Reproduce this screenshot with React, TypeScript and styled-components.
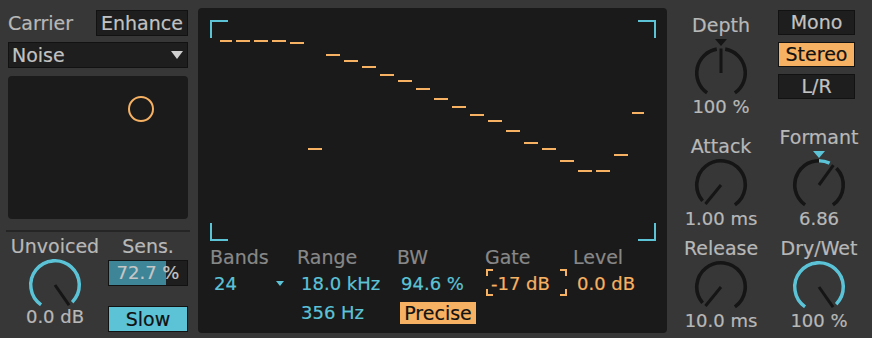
import React from "react";
import styled, { createGlobalStyle } from "styled-components";

const C = {
  bg: "#373737",
  panel: "#1a1a1a",
  pad: "#1b1b1b",
  btn: "#1e1e1e",
  border: "#121212",
  label: "#b8b8b8",
  dim: "#888888",
  cyan: "#5cc3d7",
  orange: "#f6b163",
  track: "#151515",
  teal: "#3d8597",
  ink: "#121212",
};

const GlobalStyle = createGlobalStyle`
  html, body { margin: 0; padding: 0; background: ${C.bg}; }
  body {
    font-family: "DejaVu Sans", "Liberation Sans", sans-serif;
    -webkit-text-stroke: 0.2px currentColor;
  }
  * { box-sizing: border-box; }
`;

const Device = styled.div`
  width: 872px;
  height: 338px;
  display: flex;
  align-items: flex-start;
  overflow: hidden;
  background: ${C.bg};
`;

/* ---------- shared text ---------- */
const Label = styled.div<{ $dim?: boolean }>`
  font-size: 19px;
  line-height: 20px;
  color: ${(p) => (p.$dim ? C.dim : C.label)};
  white-space: nowrap;
`;

const KnobValue = styled.div<{ $shift?: number }>`
  font-size: 18px;
  line-height: 18px;
  color: ${C.label};
  white-space: nowrap;
  margin-top: ${(p) => p.$shift ?? 0}px;
`;

type Tone = "dark" | "orange" | "cyan";
const Button = styled.div<{ $tone: Tone; $w: number; $h: number }>`
  width: ${(p) => p.$w}px;
  height: ${(p) => p.$h}px;
  border: 1px solid ${C.border};
  background: ${(p) =>
    p.$tone === "orange" ? C.orange : p.$tone === "cyan" ? C.cyan : C.btn};
  color: ${(p) => (p.$tone === "dark" ? "#c2c2c2" : C.ink)};
  font-size: 19px;
  line-height: ${(p) => p.$h - 2}px;
  text-align: center;
  white-space: nowrap;
`;

/* ---------- knob ---------- */
const R = 24.25;
const CX = 28;
const CY = 27;
const polar = (deg: number, r = R) => {
  const a = (deg * Math.PI) / 180;
  return [CX + r * Math.sin(a), CY - r * Math.cos(a)];
};
const arcPath = (a0: number, a1: number) => {
  if (a1 - a0 < 0.5) return "";
  const [x0, y0] = polar(a0);
  const [x1, y1] = polar(a1);
  const large = a1 - a0 > 180 ? 1 : 0;
  return `M${x0.toFixed(2)} ${y0.toFixed(2)} A${R} ${R} 0 ${large} 1 ${x1.toFixed(2)} ${y1.toFixed(2)}`;
};

const KnobSvg = styled.svg`
  display: block;
  margin-top: 2px;
`;

type Fill = "none" | "start" | "center";
function Knob({ value, fill }: { value: number; fill: Fill }) {
  const SPAN = 145;
  const GAP = 10;
  const ang = -SPAN + 2 * SPAN * value;
  const lo = ang - GAP;
  const hi = ang + GAP;
  const clipSeg = (a: number, b: number): [number, number][] => {
    const out: [number, number][] = [];
    const s1 = [a, Math.min(b, lo)];
    const s2 = [Math.max(a, hi), b];
    if (s1[1] > s1[0]) out.push([s1[0], s1[1]]);
    if (s2[1] > s2[0]) out.push([s2[0], s2[1]]);
    return out;
  };
  const track = clipSeg(-SPAN, SPAN);
  let fillSegs: [number, number][] = [];
  if (fill === "start") fillSegs = clipSeg(-SPAN, ang);
  if (fill === "center") fillSegs = ang >= 0 ? clipSeg(0, ang) : clipSeg(ang, 0);
  const [nx, ny] = polar(ang, 24.5);
  return (
    <KnobSvg width={56} height={52} viewBox="0 0 56 52">
      {track.map(([a, b], i) => (
        <path key={"t" + i} d={arcPath(a, b)} fill="none" stroke={C.track} strokeWidth={3.6} />
      ))}
      {fillSegs.map(([a, b], i) => (
        <path key={"f" + i} d={arcPath(a, b)} fill="none" stroke={C.cyan} strokeWidth={3.6} />
      ))}
      <line x1={CX} y1={CY} x2={nx} y2={ny} stroke={C.track} strokeWidth={3} />
    </KnobSvg>
  );
}

const KnobUnit = styled.div<{ $w: number }>`
  width: ${(p) => p.$w}px;
  display: flex;
  flex-direction: column;
  align-items: center;
`;

const Marker = styled.div<{ $color: string }>`
  width: 0;
  height: 0;
  margin-top: 4px;
  margin-bottom: -2px;
  border-left: 6.5px solid transparent;
  border-right: 6.5px solid transparent;
  border-top: 7px solid ${(p) => p.$color};
`;

function KnobControl(props: {
  label: string;
  value: number;
  text: string;
  fill: Fill;
  marker?: string;
  w?: number;
  shift?: number;
}) {
  return (
    <KnobUnit $w={props.w ?? 98}>
      <Label>{props.label}</Label>
      {props.marker && <Marker $color={props.marker} />}
      <Knob value={props.value} fill={props.fill} />
      <KnobValue $shift={props.shift}>{props.text}</KnobValue>
    </KnobUnit>
  );
}

/* ---------- left column ---------- */
const LeftColumn = styled.div`
  width: 180px;
  margin-left: 8px;
  padding-top: 10px;
  display: flex;
  flex-direction: column;
`;

const HeaderRow = styled.div`
  height: 26px;
  display: flex;
  align-items: center;
  justify-content: space-between;
`;

const Dropdown = styled.div`
  margin-top: 6px;
  height: 26px;
  border: 1px solid ${C.border};
  background: ${C.btn};
  padding: 0 4px 0 3px;
  display: flex;
  align-items: center;
  justify-content: space-between;
  font-size: 19px;
  line-height: 24px;
  color: #c2c2c2;
`;

const DownArrow = styled.span<{ $color: string; $w: number; $h: number }>`
  width: 0;
  height: 0;
  border-left: ${(p) => p.$w / 2}px solid transparent;
  border-right: ${(p) => p.$w / 2}px solid transparent;
  border-top: ${(p) => p.$h}px solid ${(p) => p.$color};
`;

const XYPad = styled.div`
  margin-top: 8px;
  height: 143px;
  background: ${C.pad};
  border-radius: 4px;
  position: relative;
`;

const XYHandle = styled.div`
  position: absolute;
  left: 120px;
  top: 20px;
  width: 26px;
  height: 26px;
  border: 2px solid ${C.orange};
  border-radius: 50%;
`;

const Separator = styled.div`
  margin: 11px -2px 0;
  height: 2px;
  background: #252525;
`;

const BottomSection = styled.div`
  margin-top: 4px;
  display: flex;
`;

const SensColumn = styled.div`
  width: 80px;
  margin-left: 6px;
  display: flex;
  flex-direction: column;
  align-items: center;
`;

const SensSlider = styled.div<{ $pct: number }>`
  margin-top: 4px;
  width: 80px;
  height: 26px;
  border: 1px solid ${C.border};
  background: linear-gradient(
    to right,
    ${C.teal} ${(p) => p.$pct}%,
    ${C.btn} ${(p) => p.$pct}%
  );
  font-size: 18px;
  line-height: 24px;
  text-align: center;
  color: #c6c6c6;
`;

const SlowButton = styled(Button)`
  margin-top: 20px;
`;

/* ---------- main panel ---------- */
const MainPanel = styled.div`
  margin: 8px 0 0 10px;
  width: 469px;
  height: 325px;
  background: ${C.panel};
  border-radius: 4px;
  padding: 12px 11px 0 12px;
  display: flex;
  flex-direction: column;
`;

const Display = styled.svg`
  display: block;
  width: 446px;
  height: 221px;
`;

const ParamsGrid = styled.div`
  margin-top: 6px;
  display: grid;
  grid-template-columns: 87px 100px 88px 88px 1fr;
`;

const ParamColumn = styled.div`
  display: flex;
  flex-direction: column;
  align-items: flex-start;
`;

const ParamValue = styled.div<{ $color: string }>`
  margin-top: 2px;
  height: 27px;
  padding: 2px 0 0 4px;
  font-size: 18px;
  line-height: 25px;
  color: ${(p) => p.$color};
  white-space: nowrap;
`;

const BandsSelect = styled(ParamValue)`
  width: 77px;
  padding-right: 3px;
  display: flex;
  align-items: center;
  justify-content: space-between;
`;

const GateBox = styled(ParamValue)`
  margin-left: 1px;
  width: 81px;
  padding-left: 5px;
  background:
    linear-gradient(${C.orange}, ${C.orange}) left top / 7px 2px no-repeat,
    linear-gradient(${C.orange}, ${C.orange}) left top / 2px 7px no-repeat,
    linear-gradient(${C.orange}, ${C.orange}) left bottom / 7px 2px no-repeat,
    linear-gradient(${C.orange}, ${C.orange}) left bottom / 2px 7px no-repeat,
    linear-gradient(${C.orange}, ${C.orange}) right top / 7px 2px no-repeat,
    linear-gradient(${C.orange}, ${C.orange}) right top / 2px 7px no-repeat,
    linear-gradient(${C.orange}, ${C.orange}) right bottom / 7px 2px no-repeat,
    linear-gradient(${C.orange}, ${C.orange}) right bottom / 2px 7px no-repeat;
`;

const SubValue = styled.div<{ $color: string }>`
  margin-top: 6px;
  height: 22px;
  padding-left: 4px;
  font-size: 18px;
  line-height: 22px;
  color: ${(p) => p.$color};
  white-space: nowrap;
`;

const PreciseButton = styled.div`
  margin: 6px 0 0 3px;
  width: 76px;
  height: 22px;
  background: ${C.orange};
  color: ${C.ink};
  font-size: 19px;
  line-height: 22px;
  text-align: center;
`;

/* ---------- right side ---------- */
const RightGrid = styled.div`
  margin-left: 5px;
  display: grid;
  grid-template-columns: 98px 98px;
  grid-template-rows: 116px 112px 102px;
  align-items: end;
  justify-items: center;
`;

const ModeButtons = styled.div`
  align-self: start;
  justify-self: start;
  margin: 10px 0 0 8px;
  display: flex;
  flex-direction: column;
  gap: 7px;
`;

const bandTops = [
  40, 40, 40, 40, 42, 148, 54, 60, 66, 74, 80, 88, 98, 106, 114, 120, 130, 142,
  148, 160, 170, 170, 154, 112,
];

function Spectrum() {
  const w = 446;
  const h = 221;
  const a = 18;
  return (
    <Display viewBox={`0 0 ${w} ${h}`}>
      <g fill={C.cyan}>
        <rect x={0} y={0} width={a} height={2} />
        <rect x={0} y={0} width={2} height={a} />
        <rect x={w - a} y={0} width={a} height={2} />
        <rect x={w - 2} y={0} width={2} height={a} />
        <rect x={0} y={h - 2} width={a} height={2} />
        <rect x={0} y={h - a} width={2} height={a} />
        <rect x={w - a} y={h - 2} width={a} height={2} />
        <rect x={w - 2} y={h - a} width={2} height={a} />
      </g>
      <g fill={C.orange}>
        {bandTops.map((t, i) => {
          const first = i === 0;
          const last = i === bandTops.length - 1;
          const x = first ? 10 : 8 + 18 * i;
          const width = first || last ? 12 : 14;
          return <rect key={i} x={x} y={t - 20} width={width} height={2} />;
        })}
      </g>
    </Display>
  );
}

export default function App() {
  return (
    <>
      <GlobalStyle />
      <Device>
        <LeftColumn>
          <HeaderRow>
            <Label>Carrier</Label>
            <Button $tone="dark" $w={92} $h={26}>
              Enhance
            </Button>
          </HeaderRow>
          <Dropdown>
            <span>Noise</span>
            <DownArrow $color="#cfcfcf" $w={13} $h={8} />
          </Dropdown>
          <XYPad>
            <XYHandle />
          </XYPad>
          <Separator />
          <BottomSection>
            <KnobControl label="Unvoiced" value={1} text="0.0 dB" fill="start" w={94} shift={-2} />
            <SensColumn>
              <Label>Sens.</Label>
              <SensSlider $pct={72.7}>72.7 %</SensSlider>
              <SlowButton $tone="cyan" $w={80} $h={26}>
                Slow
              </SlowButton>
            </SensColumn>
          </BottomSection>
        </LeftColumn>

        <MainPanel>
          <Spectrum />
          <ParamsGrid>
            <ParamColumn>
              <Label $dim>Bands</Label>
              <BandsSelect $color={C.cyan}>
                <span>24</span>
                <DownArrow $color={C.cyan} $w={9} $h={5} />
              </BandsSelect>
            </ParamColumn>
            <ParamColumn>
              <Label $dim>Range</Label>
              <ParamValue $color={C.cyan}>18.0 kHz</ParamValue>
              <SubValue $color={C.cyan}>356 Hz</SubValue>
            </ParamColumn>
            <ParamColumn>
              <Label $dim>BW</Label>
              <ParamValue $color={C.cyan}>94.6 %</ParamValue>
              <PreciseButton>Precise</PreciseButton>
            </ParamColumn>
            <ParamColumn>
              <Label $dim>Gate</Label>
              <GateBox $color={C.orange}>-17 dB</GateBox>
            </ParamColumn>
            <ParamColumn>
              <Label $dim>Level</Label>
              <ParamValue $color={C.orange}>0.0 dB</ParamValue>
            </ParamColumn>
          </ParamsGrid>
        </MainPanel>

        <RightGrid>
          <KnobControl label="Depth" value={0.5} text="100 %" fill="none" marker={C.track} />
          <ModeButtons>
            <Button $tone="dark" $w={77} $h={25}>Mono</Button>
            <Button $tone="orange" $w={77} $h={25}>Stereo</Button>
            <Button $tone="dark" $w={77} $h={25}>L/R</Button>
          </ModeButtons>
          <KnobControl label="Attack" value={0.015} text="1.00 ms" fill="none" />
          <KnobControl label="Formant" value={0.624} text="6.86" fill="center" marker={C.cyan} />
          <KnobControl label="Release" value={0.015} text="10.0 ms" fill="none" />
          <KnobControl label="Dry/Wet" value={1} text="100 %" fill="start" />
        </RightGrid>
      </Device>
    </>
  );
}
